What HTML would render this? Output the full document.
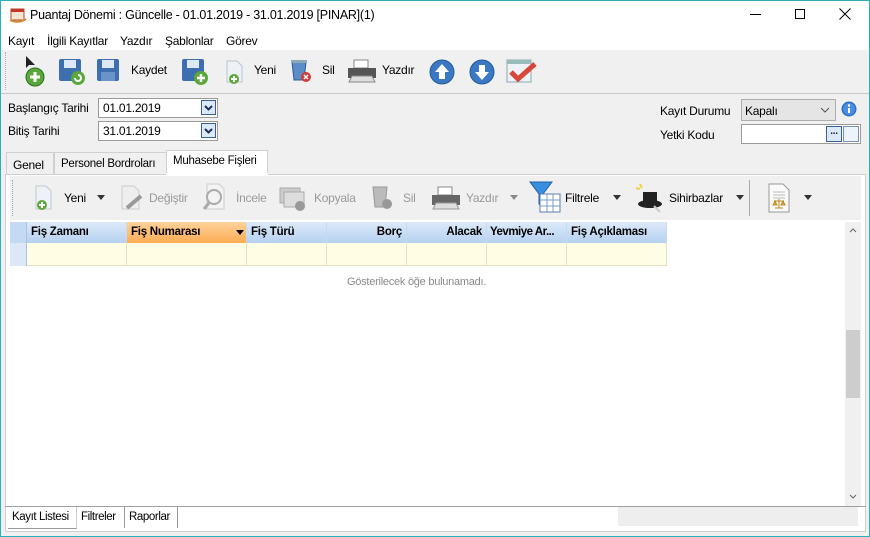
<!DOCTYPE html>
<html><head><meta charset="utf-8"><style>
*{margin:0;padding:0;box-sizing:border-box}
body{width:870px;height:537px;overflow:hidden;background:#f0f0f0;font-family:"Liberation Sans",sans-serif;font-size:12px;letter-spacing:-0.25px;color:#000;position:relative}
.a{position:absolute;white-space:nowrap}
.win{position:absolute;left:0;top:0;width:870px;height:537px;border:1px solid #2ab0b8;pointer-events:none}
.ic{position:absolute}
.gr{color:#9a9a9a}
.hd{position:absolute;top:222px;height:21px;font-weight:bold;font-size:11.5px;line-height:21px;padding:0 4px;border-right:1px solid #c9d9ee;overflow:hidden;text-overflow:ellipsis}
.cell{position:absolute;top:243px;height:23px;border-right:1px solid #e6e2c0;border-bottom:1px solid #e6e2c0;background:#fffde3}
</style></head><body>
<div class="a" style="left:0;top:0;width:870px;height:50px;background:#fff"></div>
<svg class="ic" style="left:9px;top:6px" width="18" height="18"><rect x="2" y="3" width="13" height="11" fill="#f4e4d0" stroke="#b04a30"/><rect x="2" y="3" width="13" height="3" fill="#c0392b"/><path d="M1 14 Q9 18 17 13" stroke="#d88a30" stroke-width="2" fill="none"/></svg>
<div class="a" style="left:30px;top:8px;font-size:12.5px">Puantaj Dönemi : Güncelle - 01.01.2019 - 31.01.2019 [PINAR](1)</div>
<div class="a" style="left:750px;top:14px;width:11px;height:1px;background:#000"></div>
<div class="a" style="left:795px;top:9px;width:10px;height:10px;border:1px solid #000"></div>
<svg class="ic" style="left:839px;top:8px" width="12" height="12"><path d="M0.5 0.5L11.5 11.5M11.5 0.5L0.5 11.5" stroke="#000"/></svg>
<div class="a" style="left:8px;top:34px">Kayıt</div>
<div class="a" style="left:47px;top:34px">İlgili Kayıtlar</div>
<div class="a" style="left:120px;top:34px">Yazdır</div>
<div class="a" style="left:165px;top:34px">Şablonlar</div>
<div class="a" style="left:226px;top:34px">Görev</div>
<!-- toolbar -->
<div class="a" style="left:5px;top:52px;height:38px;border-left:1px dotted #aaa"></div>
<svg class="ic" style="left:24px;top:56px" width="22" height="32"><path d="M2 0L2 12L5 9L11 9Z" fill="#222"/><circle cx="11" cy="21" r="9" fill="#5aa83a" stroke="#2d6e1f"/><path d="M11 16v10M6 21h10" stroke="#fff" stroke-width="3"/></svg>
<svg class="ic" style="left:58px;top:58px" width="30" height="28"><rect x="1" y="1" width="22" height="22" rx="2" fill="#3d6fb0"/><rect x="6" y="2" width="12" height="8" fill="#dce8f5"/><circle cx="20" cy="20" r="7" fill="#5aa83a"/><path d="M17 20a3 3 0 1 0 3-3" stroke="#fff" stroke-width="2" fill="none"/></svg>
<svg class="ic" style="left:96px;top:58px" width="26" height="26"><rect x="1" y="1" width="22" height="22" rx="2" fill="#3d6fb0"/><rect x="6" y="2" width="12" height="8" fill="#dce8f5"/><rect x="5" y="14" width="14" height="9" fill="#6a93c9"/></svg>
<div class="a" style="left:131px;top:63px">Kaydet</div>
<svg class="ic" style="left:181px;top:58px" width="30" height="28"><rect x="1" y="1" width="22" height="22" rx="2" fill="#3d6fb0"/><rect x="6" y="2" width="12" height="8" fill="#dce8f5"/><circle cx="20" cy="20" r="7" fill="#5aa83a"/><path d="M20 16v8M16 20h8" stroke="#fff" stroke-width="2.5"/></svg>
<svg class="ic" style="left:224px;top:60px" width="22" height="26"><path d="M3 1h10l5 5v16H3z" fill="#eef2f6" stroke="#b8c3cc"/><circle cx="10" cy="19" r="5" fill="#5aa83a"/><path d="M10 16v6M7 19h6" stroke="#fff" stroke-width="2"/></svg>
<div class="a" style="left:254px;top:63px">Yeni</div>
<svg class="ic" style="left:289px;top:58px" width="24" height="26"><path d="M3 4h14l-2 18H5z" fill="#5b8ec9" stroke="#2d5b93"/><rect x="2" y="2" width="16" height="3" fill="#8ab"/><circle cx="17" cy="19" r="5" fill="#d43a3a"/><path d="M15 17l4 4M19 17l-4 4" stroke="#fff" stroke-width="1.5"/></svg>
<div class="a" style="left:322px;top:63px">Sil</div>
<svg class="ic" style="left:346px;top:58px" width="32" height="26"><rect x="8" y="2" width="14" height="8" fill="#fff" stroke="#888"/><path d="M2 10h28v10H2z" fill="#555"/><path d="M6 18h20l3 6H3z" fill="#ddd" stroke="#888"/></svg>
<div class="a" style="left:382px;top:63px">Yazdır</div>
<svg class="ic" style="left:428px;top:58px" width="28" height="28"><circle cx="14" cy="14" r="12" fill="#3a78c4" stroke="#245a9a"/><path d="M14 6l7 8h-4v7h-6v-7H7z" fill="#fff"/></svg>
<svg class="ic" style="left:468px;top:58px" width="28" height="28"><circle cx="14" cy="14" r="12" fill="#3a78c4" stroke="#245a9a"/><path d="M14 22l7-8h-4V7h-6v7H7z" fill="#fff"/></svg>
<svg class="ic" style="left:505px;top:58px" width="34" height="28"><rect x="2" y="2" width="24" height="22" fill="#eef2f8" stroke="#8aa"/><rect x="2" y="2" width="24" height="4" fill="#9bb"/><path d="M6 14l7 7L30 6" stroke="#d8483a" stroke-width="5" fill="none"/></svg>
<div class="a" style="left:0;top:93px;width:870px;height:1px;background:#c8c8c8"></div>
<!-- form -->
<div class="a" style="left:8px;top:101px">Başlangıç Tarihi</div>
<div class="a" style="left:98px;top:98px;width:120px;height:20px;background:#fff;border:1px solid #9a9a9a"></div>
<div class="a" style="left:103px;top:101px">01.01.2019</div>
<div class="a" style="left:8px;top:124px">Bitiş Tarihi</div>
<div class="a" style="left:98px;top:121px;width:120px;height:20px;background:#fff;border:1px solid #9a9a9a"></div>
<div class="a" style="left:103px;top:124px">31.01.2019</div>
<svg class="ic" style="left:201px;top:100px" width="15" height="15"><rect x=".5" y=".5" width="14" height="14" fill="#dbe8f8" stroke="#3a5f96"/><path d="M4 6l3.5 3.5L11 6" stroke="#1a2f5a" stroke-width="2" fill="none"/></svg>
<svg class="ic" style="left:201px;top:123px" width="15" height="15"><rect x=".5" y=".5" width="14" height="14" fill="#dbe8f8" stroke="#3a5f96"/><path d="M4 6l3.5 3.5L11 6" stroke="#1a2f5a" stroke-width="2" fill="none"/></svg>
<div class="a" style="left:660px;top:104px">Kayıt Durumu</div>
<div class="a" style="left:741px;top:99px;width:95px;height:22px;background:#e5e5e5;border:1px solid #adadad"></div>
<div class="a" style="left:745px;top:104px">Kapalı</div>
<svg class="ic" style="left:820px;top:106px" width="10" height="8"><path d="M1 2l4 4 4-4" stroke="#555" fill="none"/></svg>
<svg class="ic" style="left:841px;top:101px" width="16" height="16"><circle cx="8" cy="8" r="7.5" fill="#2f6fc4"/><circle cx="8" cy="8" r="6" fill="#4a8ee0"/><rect x="7" y="7" width="2" height="5" fill="#fff"/><circle cx="8" cy="4.5" r="1.2" fill="#fff"/></svg>
<div class="a" style="left:660px;top:128px">Yetki Kodu</div>
<div class="a" style="left:741px;top:124px;width:120px;height:20px;background:#fff;border:1px solid #9a9a9a"></div>
<div class="a" style="left:826px;top:126px;width:16px;height:16px;background:#dbe8f8;border:1px solid #3a5f96;font-size:10px;line-height:10px;text-align:center;font-weight:bold;color:#124">...</div>
<div class="a" style="left:843px;top:126px;width:16px;height:16px;background:#eef3fa;border:1px solid #7a8fb0"></div>
<!-- tabs -->
<div class="a" style="left:6px;top:152px;width:48px;height:22px;border:1px solid #d0d0d0;border-bottom:none;padding:5px 0 0 6px">Genel</div>
<div class="a" style="left:54px;top:152px;width:113px;height:22px;border:1px solid #d0d0d0;border-bottom:none;padding:5px 0 0 6px;font-size:11.5px">Personel Bordroları</div>
<div class="a" style="left:166px;top:150px;width:102px;height:25px;background:#fff;border:1px solid #d0d0d0;border-bottom:none;padding:4px 0 0 6px;font-size:11.5px">Muhasebe Fişleri</div>
<div class="a" style="left:5px;top:174px;width:861px;height:358px;background:#fff;border:1px solid #d0d0d0"></div>
<div class="a" style="left:166px;top:173px;width:102px;height:2px;background:#fff"></div>
<!-- inner toolbar -->
<div class="a" style="left:10px;top:176px;width:851px;height:44px;background:#f0f0f0"></div>
<div class="a" style="left:12px;top:180px;height:36px;border-left:1px dotted #aaa"></div>
<svg class="ic" style="left:33px;top:184px" width="22" height="28"><path d="M3 2h10l5 5v18H3z" fill="#eef2f6" stroke="#c0c8d0"/><circle cx="9" cy="21" r="5" fill="#5aa83a"/><path d="M9 18v6M6 21h6" stroke="#fff" stroke-width="2"/></svg>
<div class="a" style="left:64px;top:191px">Yeni</div>
<svg class="ic" style="left:97px;top:195px" width="8" height="5"><path d="M0 0h8L4 5z" fill="#333"/></svg>
<svg class="ic" style="left:119px;top:184px" width="26" height="28"><path d="M3 2h12l5 5v18H3z" fill="#eee" stroke="#ccc"/><path d="M8 24l14-12" stroke="#999" stroke-width="4"/></svg>
<div class="a gr" style="left:149px;top:191px">Değiştir</div>
<svg class="ic" style="left:201px;top:182px" width="28" height="30"><path d="M6 2h12l5 5v20H6z" fill="#f3f3f3" stroke="#ccc"/><circle cx="13" cy="15" r="7" fill="none" stroke="#aaa" stroke-width="2"/><path d="M8 21l-5 6" stroke="#aaa" stroke-width="3"/></svg>
<div class="a gr" style="left:236px;top:191px">İncele</div>
<svg class="ic" style="left:278px;top:184px" width="30" height="28"><rect x="2" y="4" width="20" height="15" fill="#ccc" stroke="#aaa"/><rect x="6" y="8" width="20" height="15" fill="#ddd" stroke="#aaa"/><circle cx="22" cy="22" r="5" fill="#999"/></svg>
<div class="a gr" style="left:314px;top:191px">Kopyala</div>
<svg class="ic" style="left:370px;top:183px" width="26" height="28"><path d="M3 4h14l-2 20H5z" fill="#bbb" stroke="#999"/><circle cx="17" cy="21" r="5" fill="#999"/></svg>
<div class="a gr" style="left:403px;top:191px">Sil</div>
<svg class="ic" style="left:430px;top:185px" width="32" height="26"><rect x="8" y="2" width="14" height="8" fill="#fff" stroke="#888"/><path d="M2 10h28v10H2z" fill="#666"/><path d="M6 18h20l3 6H3z" fill="#ddd" stroke="#999"/></svg>
<div class="a gr" style="left:466px;top:191px">Yazdır</div>
<svg class="ic" style="left:510px;top:195px" width="8" height="5"><path d="M0 0h8L4 5z" fill="#888"/></svg>
<svg class="ic" style="left:528px;top:180px" width="34" height="34"><path d="M2 2h22l-9 12v14l-4-4V14z" fill="#3a8ee0" stroke="#1d5fa8"/><rect x="12" y="14" width="20" height="18" fill="#fff" stroke="#5a7fae"/><path d="M12 20h20M12 26h20M19 14v18M25 14v18" stroke="#7a9cc6"/></svg>
<div class="a" style="left:565px;top:191px">Filtrele</div>
<svg class="ic" style="left:613px;top:195px" width="8" height="5"><path d="M0 0h8L4 5z" fill="#333"/></svg>
<svg class="ic" style="left:634px;top:182px" width="30" height="32"><path d="M6 2l2 4M2 6l4 1" stroke="#f0d040" stroke-width="2"/><ellipse cx="16" cy="22" rx="12" ry="4" fill="#222"/><path d="M9 10h14v12H9z" fill="#222"/><path d="M20 24l6 6" stroke="#ccc" stroke-width="2"/></svg>
<div class="a" style="left:669px;top:191px">Sihirbazlar</div>
<svg class="ic" style="left:736px;top:195px" width="8" height="5"><path d="M0 0h8L4 5z" fill="#333"/></svg>
<div class="a" style="left:749px;top:180px;width:1px;height:36px;background:#aaa"></div>
<svg class="ic" style="left:766px;top:182px" width="26" height="32"><path d="M3 2h14l6 6v22H3z" fill="#fafafa" stroke="#999"/><path d="M7 10h12M7 13h12M7 16h12" stroke="#bbb"/><path d="M13 17v9M8 19h10M7 23l2-4 2 4zM15 23l2-4 2 4zM9 26h8" stroke="#c08a20" fill="#e0b040"/></svg>
<svg class="ic" style="left:804px;top:195px" width="8" height="5"><path d="M0 0h8L4 5z" fill="#333"/></svg>
<!-- grid -->
<div class="a" style="left:10px;top:222px;width:657px;height:21px;background:linear-gradient(#dceaf9,#b6d1f1)"></div>
<div class="a" style="left:10px;top:222px;width:17px;height:44px;background:#c4daf3;border-right:1px solid #a9c3e3"></div>
<div class="a" style="left:10px;top:243px;width:17px;height:23px;background:#dce8f7;border-right:1px solid #a9c3e3"></div>
<div class="hd" style="left:27px;width:100px">Fiş Zamanı</div>
<div class="hd" style="left:127px;width:120px;background:linear-gradient(#fed29a,#fbac54)">Fiş Numarası</div>
<svg class="ic" style="left:236px;top:230px" width="8" height="5"><path d="M0 0h8L4 5z" fill="#000"/></svg>
<div class="hd" style="left:247px;width:80px">Fiş Türü</div>
<div class="hd" style="left:327px;width:80px;text-align:right">Borç</div>
<div class="hd" style="left:407px;width:80px;text-align:right">Alacak</div>
<div class="hd" style="left:487px;width:80px;padding:0 2px 0 3px;letter-spacing:-0.5px">Yevmiye Ar...</div>
<div class="hd" style="left:567px;width:100px">Fiş Açıklaması</div>
<div class="cell" style="left:27px;width:100px"></div>
<div class="cell" style="left:127px;width:120px"></div>
<div class="cell" style="left:247px;width:80px"></div>
<div class="cell" style="left:327px;width:80px"></div>
<div class="cell" style="left:407px;width:80px"></div>
<div class="cell" style="left:487px;width:80px"></div>
<div class="cell" style="left:567px;width:100px"></div>
<div class="a" style="left:347px;top:276px;color:#8a8a8a;font-size:11px">Gösterilecek öğe bulunamadı.</div>
<!-- scrollbar -->
<div class="a" style="left:845px;top:222px;width:16px;height:285px;background:#f0f0f0"></div>
<svg class="ic" style="left:849px;top:227px" width="8" height="6"><path d="M1 5l3-3 3 3" stroke="#666" fill="none"/></svg>
<svg class="ic" style="left:849px;top:494px" width="8" height="6"><path d="M1 1l3 3 3-3" stroke="#666" fill="none"/></svg>
<div class="a" style="left:846px;top:330px;width:14px;height:68px;background:#cdcdcd"></div>
<div class="a" style="left:5px;top:506px;width:861px;height:1px;background:#a0a0a0"></div>
<!-- bottom tabs -->
<div class="a" style="left:8px;top:507px;width:69px;height:22px;border-bottom:1px solid #999;border-right:1px solid #ccc;padding:4px 0 0 4px;font-size:11.5px;letter-spacing:-0.4px">Kayıt Listesi</div>
<div class="a" style="left:78px;top:507px;width:47px;height:21px;border-right:1px solid #999;padding:4px 0 0 3px;font-size:11.5px;letter-spacing:-0.4px">Filtreler</div>
<div class="a" style="left:125px;top:507px;width:53px;height:21px;border-right:1px solid #999;padding:4px 0 0 4px;font-size:11.5px;letter-spacing:-0.4px">Raporlar</div>
<div class="a" style="left:618px;top:507px;width:240px;height:19px;background:#eeeeee"></div>
<div class="win"></div>
</body></html>
